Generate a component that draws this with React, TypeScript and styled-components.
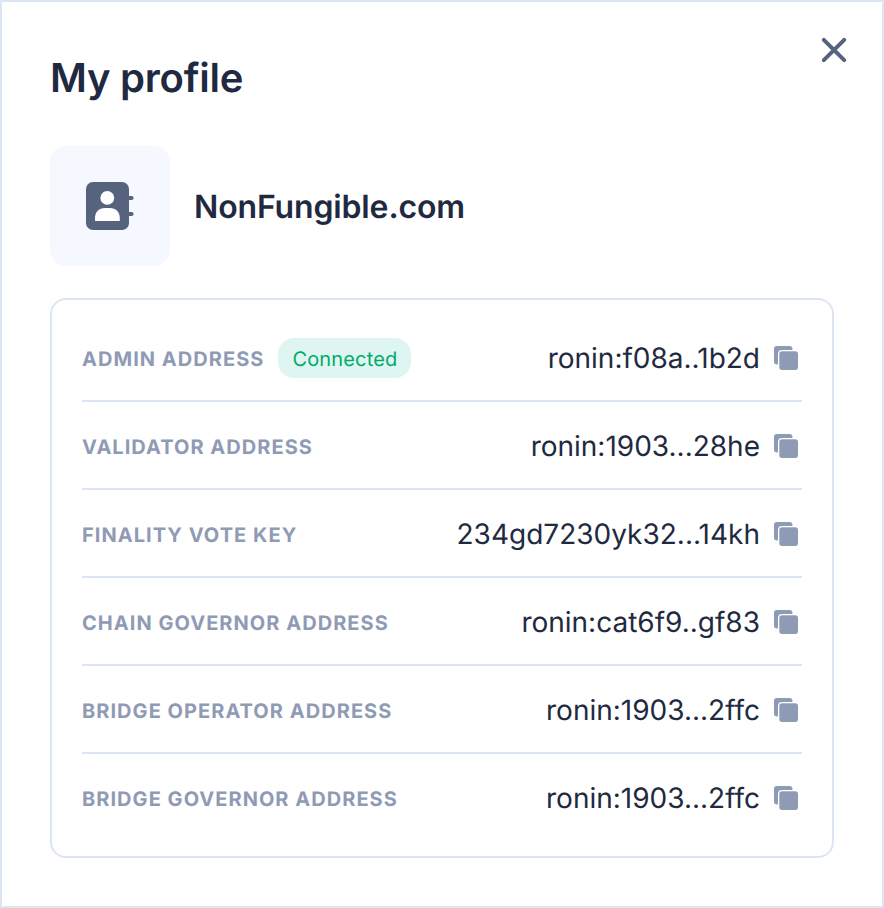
import React from "react";
import styled, { createGlobalStyle } from "styled-components";

const Global = createGlobalStyle`
  *, *::before, *::after { box-sizing: border-box; }
  body {
    margin: 0;
    background: #fff;
    font-family: Inter, sans-serif;
    color: #1f2a41;
    text-rendering: geometricPrecision;
  }
`;

const Dialog = styled.main`
  position: relative;
  width: 884px;
  height: 908px;
  padding: 48px 48px 0;
  border: 2px solid #dce6f3;
  background: #fff;
`;

const CloseButton = styled.button`
  position: absolute;
  top: 32px;
  right: 32px;
  width: 32px;
  height: 32px;
  padding: 0;
  border: 0;
  background: none;
  svg { display: block; }
`;

const Title = styled.h1`
  margin: 0;
  font-size: 40px;
  line-height: 56px;
  font-weight: 600;
  letter-spacing: -0.25px;
`;

const Identity = styled.section`
  display: flex;
  align-items: center;
  gap: 24px;
  margin-top: 40px;
`;

const Avatar = styled.div`
  display: grid;
  place-items: center;
  width: 120px;
  height: 120px;
  border-radius: 16px;
  background: #f5f9ff;
`;

const Name = styled.h2`
  margin: 0;
  padding-top: 2px;
  font-size: 32px;
  line-height: 48px;
  font-weight: 600;
  letter-spacing: -0.14px;
`;

const Card = styled.section`
  height: 560px;
  margin-top: 32px;
  padding: 14px 30px;
  border: 2px solid #dce6f3;
  border-radius: 16px;
`;

const Row = styled.div`
  display: flex;
  align-items: center;
  height: 88px;
  padding-top: 2px;
  border-bottom: 2px solid #dce6f3;
  &:last-child { border-bottom-color: transparent; }
`;

const Label = styled.span`
  padding-top: 2px;
  font-size: 20px;
  line-height: 32px;
  font-weight: 700;
  letter-spacing: 1.04px;
  color: #8f9bb5;
`;

const Badge = styled.span`
  height: 40px;
  margin-left: 14px;
  padding: 0 14px;
  border-radius: 16px;
  background: #dff5f2;
  color: #00ab6b;
  font-size: 20px;
  line-height: 42px;
  font-weight: 400;
  letter-spacing: 0.15px;
`;

const Value = styled.span`
  margin-left: auto;
  font-size: 28px;
  line-height: 40px;
`;

const CopyButton = styled.button`
  width: 32px;
  height: 32px;
  margin-left: 10px;
  padding: 0;
  border: 0;
  background: none;
  svg { display: block; }
`;

const rows = [
  { label: "ADMIN ADDRESS", value: "ronin:f08a..1b2d", connected: true },
  { label: "VALIDATOR ADDRESS", value: "ronin:1903...28he" },
  { label: "FINALITY VOTE KEY", value: "234gd7230yk32...14kh" },
  { label: "CHAIN GOVERNOR ADDRESS", value: "ronin:cat6f9..gf83" },
  { label: "BRIDGE OPERATOR ADDRESS", value: "ronin:1903...2ffc" },
  { label: "BRIDGE GOVERNOR ADDRESS", value: "ronin:1903...2ffc" },
];

const CopyIcon = () => (
  <svg width="32" height="32" viewBox="0 0 32 32" fill="#8f9bb5">
    <path d="M6.7 4H20a2.7 2.7 0 0 1 2.6 2.4c.1 1-.3 1.6-1.2 1.6H12a4 4 0 0 0-4 4v9.4c0 .9-.6 1.3-1.6 1.2A2.7 2.7 0 0 1 4 20V6.7A2.7 2.7 0 0 1 6.7 4Z" />
    <rect x="9.3" y="9.3" width="18.7" height="18.7" rx="2.7" />
  </svg>
);

const ContactIcon = () => (
  <svg width="48" height="48" viewBox="0 0 48 48" fill="#57637e">
    <rect width="43" height="48" rx="7" />
    <rect x="38" y="14" width="9.5" height="4" rx="1.8" />
    <rect x="38" y="30" width="9.5" height="4" rx="1.8" />
    <circle cx="21.3" cy="15.9" r="6.9" fill="#fff" />
    <path d="M9 39v-3c0-6 4-10 10-10h4.8c6 0 10 4 10 10v3Z" fill="#fff" />
  </svg>
);

export default function App() {
  return (
    <>
      <Global />
      <Dialog>
        <CloseButton aria-label="Close">
          <svg width="32" height="32" viewBox="0 0 32 32">
            <path d="M5.8 5.8l20.4 20.4M26.2 5.8L5.8 26.2" stroke="#57637e" strokeWidth="4" strokeLinecap="round" />
          </svg>
        </CloseButton>
        <Title>My profile</Title>
        <Identity>
          <Avatar>
            <ContactIcon />
          </Avatar>
          <Name>NonFungible.com</Name>
        </Identity>
        <Card>
          {rows.map((row) => (
            <Row key={row.label}>
              <Label>{row.label}</Label>
              {row.connected && <Badge>Connected</Badge>}
              <Value>{row.value}</Value>
              <CopyButton aria-label="Copy"><CopyIcon /></CopyButton>
            </Row>
          ))}
        </Card>
      </Dialog>
    </>
  );
}
